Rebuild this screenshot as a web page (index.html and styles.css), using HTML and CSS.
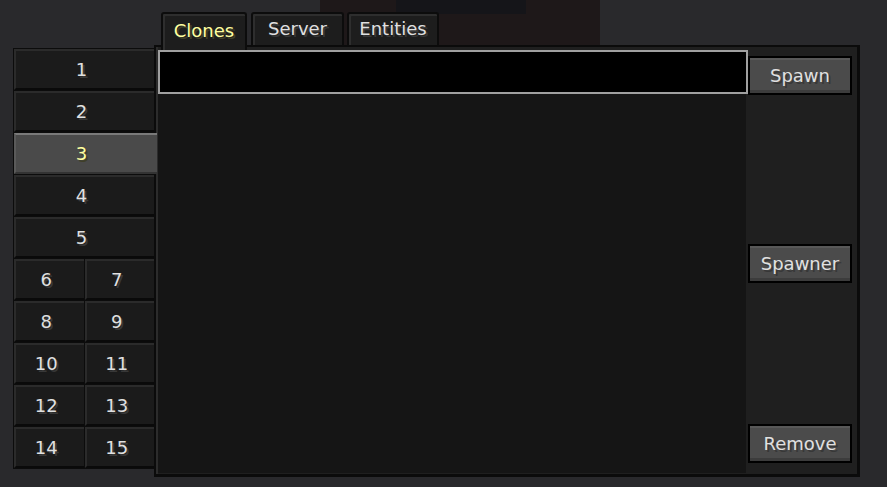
FILE: index.html
```html
<!DOCTYPE html>
<html lang="en">
<head>
    <meta charset="UTF-8">
    <meta name="viewport" content="width=device-width, initial-scale=1.0">
    <title>Clones</title>
    <link rel="stylesheet" href="styles.css">
</head>
<body>
    <div class="screen">
        <!-- Tab slots -->
        <div class="slots">
            <div class="slot wide">1</div>
            <div class="slot wide">2</div>
            <div class="slot wide selected">3</div>
            <div class="slot wide">4</div>
            <div class="slot wide">5</div>
            <div class="slot">6</div>
            <div class="slot">7</div>
            <div class="slot">8</div>
            <div class="slot">9</div>
            <div class="slot">10</div>
            <div class="slot">11</div>
            <div class="slot">12</div>
            <div class="slot">13</div>
            <div class="slot">14</div>
            <div class="slot">15</div>
        </div>

        <!-- Window -->
        <div class="window">
            <div class="tabs">
                <div class="tab active tab-clones">Clones</div>
                <div class="tab tab-server">Server</div>
                <div class="tab tab-entities">Entities</div>
            </div>
            <div class="panel">
                <div class="list">
                    <div class="field"></div>
                </div>
                <div class="side">
                    <div class="btn btn-spawn">Spawn</div>
                    <div class="btn btn-spawner">Spawner</div>
                    <div class="btn btn-remove">Remove</div>
                </div>
            </div>
        </div>
    </div>
</body>
</html>
```

FILE: styles.css
```css
/* General */
body {
    margin: 0;
    width: 887px;
    height: 487px;
    overflow: hidden;
    font-family: 'DejaVu Sans', sans-serif;
    font-size: 18px;
    color: #e0e0e0;
    text-shadow: 2px 2px 0 #383838;
    background:
        linear-gradient(#151519, #151519) 396px 0 / 130px 14px no-repeat,
        linear-gradient(#1e1819, #1e1819) 320px 0 / 280px 60px no-repeat,
        #29292c;
}

.screen {
    display: flex;
    align-items: flex-start;
    padding: 12px 0 0 13px;
}

/* Slots on the left */
.slots {
    margin-top: 36px;
    width: 142px;
    box-sizing: border-box;
    padding: 1px;
    background: #0c0c0c;
    display: grid;
    grid-template-columns: 1fr 1fr;
    gap: 1px;
}

.slot {
    height: 41px;
    box-sizing: border-box;
    background: #1b1b1b;
    border-top: 2px solid #2b2b2b;
    border-left: 2px solid #2b2b2b;
    border-bottom: 2px solid #0a0a0a;
    padding-right: 7px;
    display: flex;
    align-items: center;
    justify-content: center;
}

.slot.wide {
    grid-column: span 2;
}

.slot.selected {
    position: relative;
    z-index: 2;
    margin-right: -3px;
    padding-right: 10px;
    background: #4a4a4a;
    border-top-color: #7a7a7a;
    border-left-color: #5a5a5a;
    border-bottom-color: #333;
    color: #ffffa0;
    text-shadow: 2px 2px 0 #3f3f28;
}

/* Window */
.window {
    margin-left: -1px;
    width: 706px;
}

.tabs {
    display: flex;
    align-items: flex-start;
    margin-left: 7px;
    height: 33px;
}

.tab {
    height: 33px;
    box-sizing: border-box;
    background: #1d1d1d;
    border: 2px solid #0c0c0c;
    border-bottom: none;
    border-radius: 3px 3px 0 0;
    box-shadow: inset 2px 2px 0 #2e2e2e;
    display: flex;
    justify-content: center;
    padding-top: 4px;
}

.tab.active {
    position: relative;
    z-index: 2;
    height: 38px;
    padding-top: 6px;
    color: #ffffa0;
    text-shadow: 2px 2px 0 #3f3f28;
}

.tab-clones { width: 86px; }
.tab-server { width: 93px; margin-left: 4px; }
.tab-entities { width: 92px; margin-left: 3px; }

/* Panel */
.panel {
    height: 432px;
    box-sizing: border-box;
    display: flex;
    background: #1f1f1f;
    border: 2px solid #0b0b0b;
    border-right-width: 3px;
    border-bottom-width: 3px;
    box-shadow: inset 2px 0 0 #2c2c2c;
    padding: 3px 0 0 2px;
}

.list {
    width: 588px;
    height: 423px;
    background: #151515;
}

.field {
    width: 590px;
    height: 44px;
    box-sizing: border-box;
    background: #000;
    border: 2px solid #a0a0a0;
}

.side {
    flex: 1;
    display: flex;
    flex-direction: column;
    padding-left: 2px;
}

.btn {
    width: 104px;
    height: 39px;
    box-sizing: border-box;
    background: #4b4b4b;
    border: 2px solid #000;
    box-shadow: inset 0 2px 0 #585858, inset 0 -3px 0 #3c3c3c;
    display: flex;
    align-items: center;
    justify-content: center;
}

.btn-spawn { margin-top: 6px; }
.btn-spawner { margin-top: 149px; }
.btn-remove { margin-top: 141px; }
```
